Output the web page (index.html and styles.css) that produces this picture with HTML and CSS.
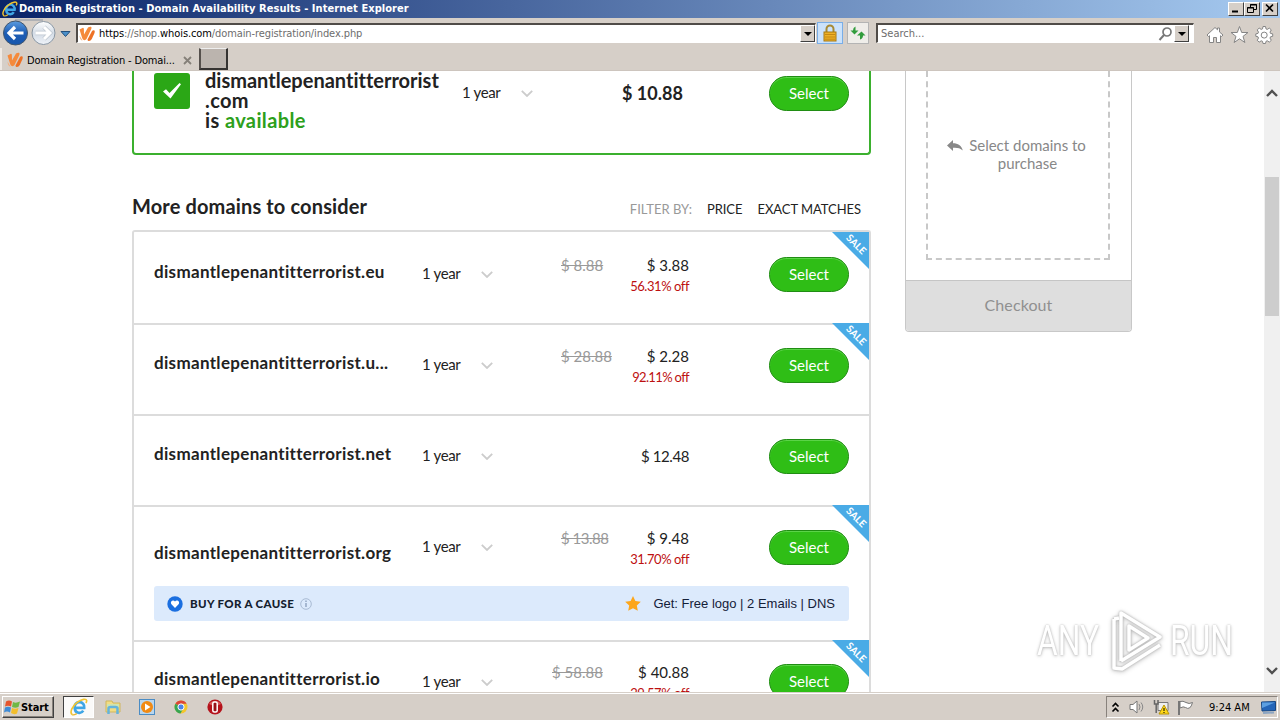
FILE: index.html
```html
<!DOCTYPE html>
<html lang="en">
<head>
<meta charset="utf-8">
<title>Domain Registration - Domain Availability Results</title>
<link rel="stylesheet" href="styles.css">
</head>
<body>
<svg width="0" height="0" class="defs">
  <defs>
    <linearGradient id="blue" x2="0" y2="1"><stop stop-color="#5b9ce0"/><stop offset=".5" stop-color="#1d5db5"/><stop offset="1" stop-color="#1756ac"/></linearGradient>
    <linearGradient id="lite" x2="0" y2="1"><stop stop-color="#fff"/><stop offset=".5" stop-color="#d4dce6"/><stop offset="1" stop-color="#eef2f8"/></linearGradient>
    <symbol id="ie" viewBox="0 0 20 20">
      <path d="M15.800 11H5.200a5.400 5.400 0 1 1 10.600 0z M5.400 12a5 5 0 0 0 9.300 2" fill="none" stroke="#3fa6e6" stroke-width="3"/>
      <path d="M2.500 18.500C-1 16 3 8 9 4.200c4-2.700 9-4 9.500-1.500.2 1-.3 2-.8 2.800" fill="none" stroke="#f1c430" stroke-width="1.800"/>
      <path d="M2.500 18.500c1.200.8 3.500-.3 5-1.200" fill="none" stroke="#e5b82b" stroke-width="1.500"/>
    </symbol>
    <symbol id="whois" viewBox="0 0 16 16"><path d="M.5 3.500L4 1.800q1 .2.900 1.800L5 8.500 9 1.500q1-1 3-.8 1 .5.300 2.300L7.500 13q-1 1.500-2.700 1-1.300-.3-1.800-2.500z" fill="#f58a3c"/><path d="M8.500 13.500L13 5q1-1.200 2.500-.5.5.8 0 2.500l-2.700 6q-1.300 2.300-3.300 2-1-.3-1-1.500z" fill="#ed7125"/><path d="M.5 9.500l3 5q-2.500 0-3-5z" fill="#f7ac78"/></symbol>
    <symbol id="chev" viewBox="0 0 12 7"><path d="M.8.8L6 6 11.200.8" fill="none" stroke="#ccc" stroke-width="1.800"/></symbol>
  </defs>
</svg>
<header class="titlebar">
  <svg class="ie-icon"><use href="#ie"/></svg>
  <span class="wtitle">Domain Registration - Domain Availability Results - Internet Explorer</span>
  <div class="winbtns">
    <i><svg width="16" height="13"><path d="M4 9.500h6" stroke="#000" stroke-width="2"/></svg></i>
    <i><svg width="16" height="13"><path d="M6.500 5V2.500h6v5H10M3.500 5.500h6v5h-6zM6 3h7M3 6h7" fill="none" stroke="#000"/></svg></i>
    <i class="x"><svg width="16" height="13"><path d="M4 2.500l7 7M11 2.500l-7 7" stroke="#000" stroke-width="1.700"/></svg></i>
  </div>
</header>
<nav class="toolbar">
  <svg class="arrows" width="74" height="30">
    <path d="M15 2h28" stroke="#8a96a4" fill="none"/>
    <circle cx="15.500" cy="15" r="12" fill="url(#blue)" stroke="#41566e"/>
    <path d="M15 9l-6 6 6 6M9.500 15h14" stroke="#fff" stroke-width="3.200" fill="none"/>
    <circle cx="43.500" cy="15" r="11.500" fill="url(#lite)" stroke="#8996a3"/>
    <path d="M44 9l6 6-6 6M49.500 15h-14" stroke="#bfc7d0" stroke-width="4.500" fill="none"/><path d="M44 9l6 6-6 6M49.500 15h-14" stroke="#fff" stroke-width="3" fill="none"/>
    <path d="M61 13.500h9l-4.500 5z" fill="#4a8fc9" stroke="#24507c"/>
  </svg>
  <div class="address"><svg width="16" height="16"><use href="#whois"/></svg><span class="url"><b>https</b>://shop.<b>whois.com</b>/domain-registration/index.php</span><i class="drop"></i></div>
  <div class="tbtn lock"><svg width="16" height="18"><path d="M4.500 9V5a3.500 3.500 0 0 1 7 0v4" fill="none" stroke="#a78a35" stroke-width="2"/><rect x="2" y="8" width="12" height="9" fill="#eeb126" stroke="#a87813"/><path d="M3 10.500h10M3 13h10M3 15.200h10" stroke="#c58813"/></svg></div>
  <div class="tbtn"><svg width="16" height="16"><path d="M5.500 1.500v4h3L4.500 9.500.5 5.500h2.500q0-3 2.500-4zM10 14.500v-4H7l4.500-4 4 4H13c0 2-1 3.500-3 4z" fill="#319c3c"/></svg></div>
  <div class="search"><span>Search...</span><svg width="16" height="16"><circle cx="9" cy="6" r="4" fill="none" stroke="#777" stroke-width="1.700"/><path d="M6 9l-4.500 5" stroke="#777" stroke-width="2"/></svg><i class="drop"></i></div>
  <svg class="tools" width="72" height="20" fill="#fff" stroke="#858585">
    <path d="M2 10L10 2.500l2.500 2.300V3h2v4L18 10l-1.500 1.500-1-.8V17.500h-4v-5h-3v5h-4v-6.800l-1 .8z"/>
    <path d="M34.500 1.500l2.200 6h6.300l-5 3.900 1.900 6.100-5.400-3.700-5.400 3.700 1.900-6.100-5-3.900h6.300z"/>
    <path d="M58 1.500h2.500l.5 2.400 1.300.5 2-1.300 2 1.800-1.300 2.200.5 1.300 2.200.5v2.400l-2.200.5-.5 1.300 1.300 2.200-2 1.800-2-1.300-1.300.5-.5 2.200H58l-.5-2.200-1.300-.5-2 1.300-2-1.800 1.300-2.200-.5-1.300-2.200-.5V8.900l2.200-.5.5-1.300-1.300-2.200 2-1.800 2 1.300 1.300-.5z"/><circle cx="59.200" cy="10.100" r="3"/>
  </svg>
</nav>
<div class="tabs">
  <div class="tab"><svg width="16" height="16"><use href="#whois"/></svg><span>Domain Registration - Domai...</span><svg class="close" width="9" height="9"><path d="M1 1l7 7M8 1L1 8" stroke="#858079" stroke-width="1.800"/></svg></div>
  <div class="newtab"></div>
</div>
<div class="view">
  <main class="page">
    <div class="left">
      <section class="hero">
        <div class="check"><svg width="18" height="16"><path d="M0 8.500l3-2.200 3.500 3.800L16.500 0 18 1.200 7.500 15.500z" fill="#fff"/></svg></div>
        <div class="hname"><span class="h1">dismantlepenantitterrorist</span><br><span class="h3">.com</span><br><span class="h3">is <em>available</em></span></div>
        <div class="year"><span>1 year</span><svg><use href="#chev"/></svg></div>
        <strong class="hprice">$ 10.88</strong>
        <button>Select</button>
      </section>
      <div class="heading"><h2>More domains to consider</h2><div class="filter"><span class="f0">FILTER BY:</span><span class="f1">PRICE</span><span class="f2">EXACT MATCHES</span></div></div>
      <section class="list">
        <article class="row">
          <div class="name">dismantlepenantitterrorist.eu</div><div class="year"><span>1 year</span><svg><use href="#chev"/></svg></div>
          <div class="prices"><s>$ 8.88</s><span>$ 3.88</span><small>56.31% off</small></div><button>Select</button><div class="sale"><b>SALE</b></div>
        </article>
        <article class="row">
          <div class="name">dismantlepenantitterrorist.u...</div><div class="year"><span>1 year</span><svg><use href="#chev"/></svg></div>
          <div class="prices"><s>$ 28.88</s><span>$ 2.28</span><small class="tight">92.11% off</small></div><button>Select</button><div class="sale"><b>SALE</b></div>
        </article>
        <article class="row">
          <div class="name">dismantlepenantitterrorist.net</div><div class="year"><span>1 year</span><svg><use href="#chev"/></svg></div>
          <div class="prices solo"><span>$ 12.48</span></div><button>Select</button>
        </article>
        <article class="row org">
          <div class="name">dismantlepenantitterrorist.org</div><div class="year"><span>1 year</span><svg><use href="#chev"/></svg></div>
          <div class="prices"><s>$ 13.88</s><span>$ 9.48</span><small>31.70% off</small></div><button>Select</button><div class="sale"><b>SALE</b></div>
          <div class="cause">
            <svg width="16" height="16"><circle cx="8" cy="8" r="7.700" fill="#1b6fe0"/><path d="M8 12L4.200 8C2.800 5 6.500 3.300 8 5.500 9.500 3.300 13.200 5 11.800 8z" fill="#fff"/></svg>
            <strong>BUY FOR A CAUSE</strong>
            <svg width="12" height="12"><circle cx="6" cy="6" r="5.300" fill="none" stroke="#a9bbd4"/><path d="M6 2.500v1.500M6 5v4" stroke="#93a7c2" stroke-width="1.500"/></svg>
            <svg class="star" width="16" height="15"><path d="M8 0l2.400 5 5.400.7-4 3.700 1 5.400L8 12.200l-4.800 2.600 1-5.400-4-3.700L5.600 5z" fill="#fca61c"/></svg>
            <span>Get: Free logo | 2 Emails | DNS</span>
          </div>
        </article>
        <article class="row io">
          <div class="name">dismantlepenantitterrorist.io</div><div class="year"><span>1 year</span><svg><use href="#chev"/></svg></div>
          <div class="prices"><s>$ 58.88</s><span>$ 40.88</span><small>29.57% off</small></div><button>Select</button><div class="sale"><b>SALE</b></div>
        </article>
      </section>
    </div>
    <aside class="cart">
      <div class="dashed"><svg width="16" height="12"><path d="M0 5.500L6 0v3.200c5 0 8.500 2 9.800 7.300C13 8 10 7.500 6 7.800V11z" fill="#888"/></svg><p><span class="p1">Select domains to</span><br><span class="p2">purchase</span></p></div>
      <div class="checkout"><span>Checkout</span></div>
    </aside>
  </main>
  <div class="scroll">
    <svg width="12" height="8"><path d="M1 7l5-5 5 5" fill="none" stroke="#505050" stroke-width="2.400"/></svg>
    <div class="thumb"></div>
    <svg class="down" width="12" height="8"><path d="M1 1l5 5 5-5" fill="none" stroke="#505050" stroke-width="2.400"/></svg>
  </div>
  <div class="watermark">
    <span>ANY</span>
    <svg width="60" height="66" fill="none" stroke-linejoin="round"><g class="glow" stroke="#fff" stroke-width="3.500"><path d="M15 54V6l39 24-39 24"/><path d="M23 19v24l19-12z"/><path d="M8 12v49l8 1 38-24M8 12l5-1"/></g></svg>
    <span>RUN</span>
  </div>
</div>
<footer class="taskbar">
  <div class="start"><svg width="17" height="16"><path d="M2 2.500q3-2 6 0l-1 5q-3-1.500-6 0z" fill="#e5552d"/><path d="M9 3q3 1.500 7-.5l-1.500 5.500q-3 1.500-6.500 0z" fill="#6fb844"/><path d="M1 8.500q3-1.500 6 0l-1 5q-3-2-6 0z" fill="#3e8bd6"/><path d="M8 9q3 1.500 6.500 0l-1.500 5.500q-3 1.500-6-.5z" fill="#f3be2c"/></svg><b>Start</b></div>
  <div class="active"><svg width="18" height="18"><use href="#ie"/></svg></div>
  <svg class="q q1" width="16" height="16"><path d="M1 2h6l1 2h7v9H1z" fill="#f2dc83" stroke="#cfb65c"/><path d="M2 5h12v3H2z" fill="#cfe3b0"/><path d="M3.500 15V9.500q0-1.500 2-1.500h5q2 0 2 1.500V15" fill="none" stroke="#64b4dc" stroke-width="2.500"/></svg>
  <svg class="q q2" width="16" height="16"><rect x=".5" y=".5" width="15" height="15" fill="#b9d6ee" stroke="#4b8cc4"/><circle cx="8" cy="8" r="6" fill="#f18a14"/><path d="M6 4.500v7L11.500 8z" fill="#fff"/></svg>
  <svg class="q q3" width="14" height="14"><circle cx="7" cy="7" r="6.500" fill="#f4c62c"/><path d="M7 7L1.400 3.700A6.500 6.500 0 0 1 12.600 3.700H7z" fill="#dc4537"/><path d="M7 7L1.400 3.700A6.500 6.500 0 0 0 6.500 13.500L9 9z" fill="#37a552"/><circle cx="7" cy="7" r="3.100" fill="#4b84e8" stroke="#fff"/></svg>
  <svg class="q q4" width="16" height="16"><circle cx="8" cy="8" r="7.600" fill="#b5121b"/><path d="M2 5a7 6 0 0 1 12 0q-6 3-12 0" fill="#da5a5c"/><rect x="5.800" y="3" width="4.400" height="10" rx="1.500" fill="#981018" stroke="#fff" stroke-width="1.500"/></svg>
  <div class="tray">
    <svg width="7" height="11"><path d="M.5 4.500l3-3 3 3M.5 9.500l3-3 3 3" fill="none" stroke="#000" stroke-width="1.600"/></svg>
    <svg class="spk" width="16" height="14"><path d="M1 4.500h3l4-3.500v12L4 9.500H1z" fill="#fff" stroke="#777"/><path d="M10 4q2 3 0 6M12 2.500q3.500 4.500 0 9" fill="none" stroke="#888"/></svg>
    <svg class="net" width="17" height="16"><path d="M5 3.500h10v8H5z" fill="#eee" stroke="#777"/><path d="M1.500 1v4h3.500V1M3.200 5v9" stroke="#666" fill="none" stroke-width="1.500"/><path d="M11 6l5 9H6z" fill="#ffd817" stroke="#b99506"/><path d="M11 9v3M11 13v1" stroke="#000"/></svg>
    <svg class="flag" width="17" height="15"><path d="M2 1v14" stroke="#777" stroke-width="2"/><path d="M3 1.500q3-1 6 1t6.500 0q-1 4-3 5.500-2 1-4-.5T3 8z" fill="#fff" stroke="#777"/></svg>
    <time>9:24 AM</time>
    <svg class="desk" width="15" height="13"><path d="M.5 1L14.500.5v9L1 10z" fill="#2465b8" stroke="#174783"/><path d="M1 1.500h13L1 7z" fill="#5c9fe1"/><path d="M2 12l11-.5" stroke="#8ca5c2" stroke-width="2"/></svg>
  </div>
</footer>
</body>
</html>
```

FILE: styles.css
```css
* { box-sizing: border-box; }
body { margin: 0; width: 1280px; height: 720px; overflow: hidden; background: #d6cfc8; font-family: Lato, sans-serif; font-variant-ligatures: none; color: #222; display: flex; flex-direction: column; }
svg { display: block; flex: none; overflow: visible; }
.defs { position: absolute; }
span, b, strong, time, s { white-space: nowrap; }

.titlebar { height: 18px; flex: none; display: flex; align-items: center; background: linear-gradient(90deg, #0a2468, #a6caf0); padding: 0 2px; color: #fff; }
.ie-icon { width: 16px; height: 16px; }
.wtitle { font: bold 11px/18px "DejaVu Sans Condensed", "DejaVu Sans", sans-serif; margin-left: 1px; letter-spacing: 0.06px; }
.winbtns { margin-left: auto; display: flex; }
.winbtns i { width: 16px; height: 14px; background: #d6cfc8; border: 1px solid; border-color: #fff #404040 #404040 #fff; }
.winbtns svg { margin: -1px; }
.winbtns .x { margin-left: 2px; }

.toolbar { height: 30px; flex: none; display: flex; align-items: flex-start; font: 11px "DejaVu Sans Condensed", "DejaVu Sans", sans-serif; color: #6d6d6d; }
.arrows { margin-right: 2px; }
.address, .search { margin-top: 5px; height: 20px; background: #fff; border: 1px solid #fff; border-top: 2px solid #504c48; border-left: 2px solid #504c48; display: flex; align-items: center; }
.address { width: 740px; padding-left: 1px; }
.url { margin-left: 4px; letter-spacing: -0.1px; }
.url b { font-weight: normal; color: #000; }
.drop { width: 15px; height: 17px; background: #d6cfc8; border: 1px solid; border-color: #fff #404040 #404040 #fff; margin-left: auto; display: flex; align-items: center; justify-content: center; }
.drop::after { content: ""; border: 4px solid transparent; border-top-color: #000; border-bottom: 0; }
.tbtn { width: 22px; height: 22px; margin: 4px 0 0 4px; background: #efede9; border: 1px solid #b4b4b4; display: flex; align-items: center; justify-content: center; }
.lock { width: 26px; margin-left: 1px; background: #cbe2fb; border-color: #79aee8; }
.search { width: 318px; margin-left: 7px; padding-right: 4px; }
.search span { margin-left: 3px; }
.search svg { margin-left: auto; }
.search .drop { margin-left: 0; }
.tools { margin: 7px 0 0 11px; }

.tabs { height: 23px; flex: none; display: flex; font: 11px "DejaVu Sans Condensed", "DejaVu Sans", sans-serif; color: #000; border-bottom: 1px solid #cdc5be; }
.tab { width: 198px; display: flex; align-items: center; padding: 2px 6px 0 5px; border-left: 2px solid #efeae5; }
.tab span { margin-left: 4px; letter-spacing: -0.16px; }
.close { margin-left: auto; }
.newtab { width: 29px; height: 22px; margin-left: 1px; background: #bbb4ae; border: 2px solid #353331; border-left-color: #55504c; border-top: 1px solid #eee; }

.view { height: 621px; flex: none; display: flex; overflow: hidden; position: relative; background: #fff; }
.page { flex: 1; padding-left: 132px; display: flex; align-items: flex-start; gap: 34px; }
.left { width: 739px; }
.hero { height: 84px; border: 2px solid #3bb02e; border-top: 0; border-radius: 0 0 4px 4px; padding-left: 20px; display: flex; align-items: flex-start; }
.check { width: 36px; height: 36px; margin-top: 2px; border-radius: 3px; background: #2ba716; display: flex; align-items: center; justify-content: center; }
.hname { width: 257px; margin: -1px 0 0 15px; font-weight: bold; font-size: 20px; line-height: 20px; }
.h3 { letter-spacing: 0.38px; }
.hname em { color: #2da01b; font-style: normal; }
.year { font-size: 15px; line-height: 20px; height: 20px; display: flex; align-items: center; }
.year span { width: 39px; letter-spacing: -0.35px; position: relative; top: -1px; }
.year svg { width: 12px; height: 7px; margin-left: 20px; }
.hero .year { width: 160px; margin-top: 12px; }
.hprice { font-size: 18px; line-height: 22px; margin-top: 11px; width: 147px; }
button { width: 80px; height: 35px; padding: 0 0 2px; border: 1px solid #208d13; border-radius: 18px; background: #2fbe16; box-shadow: inset 0 1px #5bd348; color: #fff; font: 15px/20px Lato, sans-serif; }
.hero button { margin-top: 5px; }
.heading { height: 75px; display: flex; justify-content: space-between; padding: 40px 10px 0 0; }
h2 { margin: 0; font-size: 20px; line-height: 22px; white-space: nowrap; letter-spacing: 0.14px; }
.filter { display: flex; font-size: 13px; line-height: 20px; padding-top: 4px; gap: 15px; }
.f0 { color: #999; }
.f1, .f2 { letter-spacing: -0.05px; }
.list { border: 2px solid #dcdcdc; border-radius: 3px 3px 0 0; border-bottom: 0; }
.row { position: relative; height: 91px; border-top: 2px solid #dcdcdc; padding: 23px 0 0 20px; display: grid; grid-template-columns: 268px 139px 128px 80px; justify-content: start; align-items: start; align-content: start; }
.row button { margin-left: 80px; }
.row:first-child { border-top: 0; padding-top: 25px; }
.name { font-weight: bold; font-size: 17px; line-height: 20px; margin-top: 5px; white-space: nowrap; letter-spacing: 0.32px; }
.row .year { margin-top: 7px; }
.prices { display: flex; flex-wrap: wrap; justify-content: space-between; font-size: 15px; line-height: 20px; margin-top: -2px; }
.prices s { color: #999; }
.prices small { width: 100%; text-align: right; font-size: 13px; line-height: 20px; color: #bd1010; margin-top: 1px; letter-spacing: -0.45px; }
.prices .tight { letter-spacing: -0.65px; }
.solo { justify-content: flex-end; margin-top: 7px; letter-spacing: -0.4px; }
.sale { position: absolute; top: -2px; right: 0; width: 37px; height: 37px; background: #4aabe6; clip-path: polygon(0 0, 100% 0, 100% 100%); color: #fff; }
.row:first-child .sale { top: 0; }
.sale b { position: absolute; left: 13px; top: 6px; font-size: 10px; line-height: 12px; transform: rotate(45deg); }
.org { height: 135px; }
.org s { letter-spacing: -0.5px; }
.org .name { margin-top: 13px; }
.cause { grid-column: 1 / -1; width: 695px; height: 35px; margin-top: 17px; background: #dceafc; border-radius: 3px; display: flex; align-items: center; padding: 0 14px 0 13px; }
.cause strong { margin: 0 6px 0 7px; font-size: 11.500px; font-weight: 900; color: #14202e; letter-spacing: 0.35px; }
.cause span { font: 13px "Liberation Sans", sans-serif; margin-left: 12px; color: #142038; }
.star { margin-left: auto; }
.io { padding-top: 22px; }
.io .year { margin-top: 8px; }
.io .prices { margin-left: -9px; }

.cart { width: 227px; height: 261px; border: 1px solid #c8c8c8; border-top: 0; border-radius: 0 0 4px 4px; overflow: hidden; }
.dashed { height: 189px; margin: 0 21px 20px 20px; border: 2px dashed #c8c8c8; border-top: 0; display: flex; padding: 65px 0 0 19px; color: #888; }
.dashed svg { margin-top: 4px; }
.dashed p { margin: 0 0 0 5px; width: 119px; text-align: center; font-size: 15px; line-height: 18px; }
.checkout { height: 52px; background: #dedede; border-top: 1px solid #c5c5c5; text-align: center; font-size: 16px; line-height: 48px; color: #909090; letter-spacing: 0.1px; }
.scroll { width: 16px; background: #f0f0f0; display: flex; flex-direction: column; align-items: center; padding-top: 18px; }
.thumb { width: 14px; height: 139px; background: #cdcdcd; margin-top: 80px; }
.down { margin-top: auto; margin-bottom: 17px; }
.watermark { position: absolute; left: 1037px; top: 536px; display: flex; align-items: center; }
.watermark span { width: 64px; font: 400 43px/66px Roboto, sans-serif; color: #fff; text-shadow: 0 0 2px #bbb, 0 1px 4px #bbb; transform: scaleX(.74); transform-origin: 0 50%; }
.watermark svg { margin: 0 4px 0 5px; }
.glow { filter: drop-shadow(0 0 1px #aaa) drop-shadow(0 1px 2px #ccc); }

.taskbar { height: 28px; flex: none; border-top: 1px solid #d6cfc8; box-shadow: inset 0 1px #fff; display: flex; align-items: center; padding: 1px 2px 0 2px; font: 11px "DejaVu Sans Condensed", "DejaVu Sans", sans-serif; color: #000; }
.start { width: 52px; height: 22px; border: 1px solid; border-color: #fff #404040 #404040 #fff; display: flex; align-items: center; padding-left: 1px; box-shadow: inset -1px -1px #88827c; }
.start b { margin-left: 0; letter-spacing: -0.1px; }
.active { width: 31px; height: 22px; margin-left: 9px; background: #fbfaf9; border: 1px solid; border-color: #404040 #fff #fff #404040; display: flex; align-items: center; justify-content: center; }
.q1 { margin-left: 11px; }
.q2 { margin-left: 18px; }
.q3 { margin-left: 19px; }
.q4 { margin-left: 19px; }
.tray { margin-left: auto; width: 172px; height: 22px; border: 1px solid; border-color: #88827c #fff #fff #88827c; display: flex; align-items: center; padding-left: 5px; }
.spk { margin-left: 10px; }
.net { margin-left: 8px; }
.flag { margin-left: 7px; }
.tray time { margin-left: 15px; }
.desk { margin-left: auto; margin-right: 1px; }
```
